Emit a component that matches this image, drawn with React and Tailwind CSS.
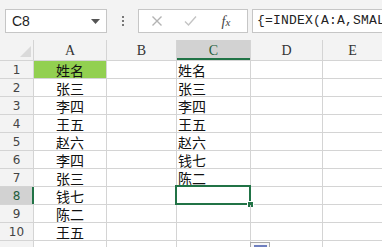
import React from "react";

const colA = ["姓名", "张三", "李四", "王五", "赵六", "李四", "张三", "钱七", "陈二", "王五"];
const colC = ["姓名", "张三", "李四", "王五", "赵六", "钱七", "陈二", "", "", ""];

const cjk = { fontFamily: '"Noto Sans CJK SC", "Noto Sans", sans-serif' };
const mono = { fontFamily: '"Liberation Mono", "DejaVu Sans Mono", monospace' };
const serif = { fontFamily: '"Liberation Serif", "Times New Roman", serif' };

function HeaderCell({ label, selected, last }) {
  return (
    <div
      className={`relative flex items-center justify-center h-full ${last ? "" : "border-r border-[#d4d4d4]"} ${
        selected ? "bg-[#d2d2d2] text-[#1e5e3b]" : "text-[#333]"
      } text-[14px]`}
      style={serif}
    >
      {label}
      {selected && <div className="absolute left-0 right-0 bottom-0 h-[2px] bg-[#217346]" />}
    </div>
  );
}

export default function App() {
  return (
    <div className="w-[382px] h-[247px] overflow-hidden bg-white relative select-none">
      {/* Formula bar area */}
      <div className="h-[40px] bg-[#f3f3f3] flex items-start pt-[9px] pl-[5px]">
        <div className="w-[102px] h-[24px] bg-white border border-[#c6c6c6] flex items-center pl-[6px] pr-[6px] justify-between">
          <span className="text-[14px] text-[#222]" style={{ fontFamily: '"Liberation Sans", Arial, sans-serif' }}>
            C8
          </span>
          <svg width="9" height="5" viewBox="0 0 9 5">
            <polygon points="0,0 9,0 4.5,5" fill="#555" />
          </svg>
        </div>
        <div className="w-[31px] h-[24px] flex flex-col items-center justify-center gap-[2px]">
          <div className="w-[2px] h-[2px] bg-[#777]" />
          <div className="w-[2px] h-[2px] bg-[#777]" />
          <div className="w-[2px] h-[2px] bg-[#777]" />
        </div>
        <div className="w-[110px] h-[24px] bg-white border border-[#c6c6c6] flex items-center">
          <div className="w-[36px] flex justify-center">
            <svg width="12" height="12" viewBox="0 0 12 12">
              <path d="M1.5 1.5 L10.5 10.5 M10.5 1.5 L1.5 10.5" stroke="#b3b3b3" strokeWidth="1.4" />
            </svg>
          </div>
          <div className="w-[30px] flex justify-center">
            <svg width="13" height="12" viewBox="0 0 13 12">
              <path d="M1 6.5 L4.5 10 L12 1.5" stroke="#c4c4c4" strokeWidth="1.4" fill="none" />
            </svg>
          </div>
          <div className="flex-1 flex justify-center">
            <span className="italic text-[14px] text-[#444]" style={serif}>
              f<span className="text-[11px]">x</span>
            </span>
          </div>
        </div>
        <div className="ml-[4px] flex-1 h-[24px] bg-white border border-[#c6c6c6] border-r-0 flex items-center pl-[4px] overflow-hidden whitespace-nowrap">
          <span className="text-[13px] text-[#222] tracking-[0.2px]" style={mono}>
            {"{=INDEX(A:A,SMAL"}
          </span>
        </div>
      </div>

      {/* Grid */}
      <div className="grid" style={{ gridTemplateColumns: "34px 73px 70px 74px 72px 1fr" }}>
        {/* header row */}
        <div className="h-[21px] bg-[#f3f3f3] border-r border-b border-[#d4d4d4] flex items-end justify-end pr-[2px] pb-[3px]">
          <svg width="11" height="11" viewBox="0 0 11 11">
            <polygon points="11,0 11,11 0,11" fill="#dadada" />
          </svg>
        </div>
        {["A", "B", "C", "D", "E"].map((l, i) => (
          <div key={l} className="h-[21px] bg-[#f3f3f3] border-b border-[#d4d4d4]">
            <HeaderCell label={l} selected={l === "C"} last={i === 4} />
          </div>
        ))}

        {colA.map((a, r) => {
          const rowSel = r === 7;
          return (
            <React.Fragment key={r}>
              <div
                className={`relative h-[18px] border-r border-b border-[#d4d4d4] flex items-center justify-center ${
                  rowSel ? "bg-[#d2d2d2] text-[#1e5e3b]" : "bg-[#f3f3f3] text-[#444]"
                }`}
                style={{ fontFamily: '"DejaVu Sans", sans-serif' }}
              >
                <span className="text-[12px] leading-none">{r + 1}</span>
                {rowSel && <div className="absolute right-[-1px] top-0 bottom-0 w-[2px] bg-[#217346]" />}
              </div>
              <div
                className={`h-[18px] border-r border-b border-[#d4d4d4] flex items-center justify-center text-[14px] leading-none text-[#111] ${
                  r === 0 ? "bg-[#92d050]" : ""
                }`}
                style={cjk}
              >
                {a}
              </div>
              <div className="h-[18px] border-r border-b border-[#d4d4d4]" />
              <div
                className="relative h-[18px] border-r border-b border-[#d4d4d4] flex items-center pl-[1px] text-[14px] leading-none text-[#111]"
                style={cjk}
              >
                {colC[r]}
                {rowSel && (
                  <>
                    <div className="absolute left-[-2px] top-[-2px] right-[-1px] bottom-[-1px] border-2 border-[#217346]" />
                    <div className="absolute right-[-4px] bottom-[-4px] w-[7px] h-[7px] bg-[#217346] border border-white" />
                  </>
                )}
              </div>
              <div className="h-[18px] border-r border-b border-[#d4d4d4]" />
              <div className="h-[18px] border-b border-[#d4d4d4]" />
            </React.Fragment>
          );
        })}
        {/* row 11 partial */}
        <div className="h-[18px] bg-[#f3f3f3] border-r border-[#d4d4d4]" />
        <div className="h-[18px] border-r border-[#d4d4d4]" />
        <div className="h-[18px] border-r border-[#d4d4d4]" />
        <div className="relative h-[18px] border-r border-[#d4d4d4]">
          <div className="absolute left-[73px] top-[1px] w-[20px] h-[12px] bg-[#f7f7f7] border border-[#a9a9a9] z-10 flex justify-center pt-[2px]">
            <div className="w-[13px] h-[6px] bg-[#6f7fbf]" />
          </div>
        </div>
        <div className="h-[18px] border-r border-[#d4d4d4]" />
        <div className="h-[18px]" />
      </div>
    </div>
  );
}
